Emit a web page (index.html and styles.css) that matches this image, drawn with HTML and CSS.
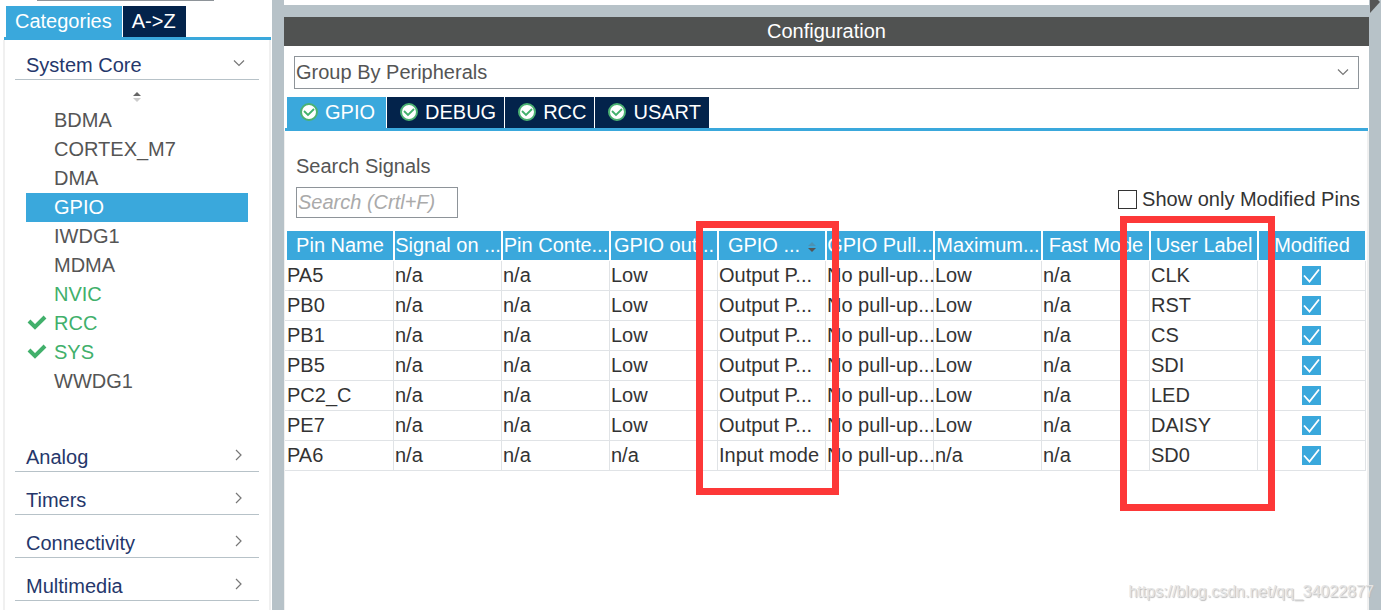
FILE: index.html
```html
<!DOCTYPE html>
<html lang="en">
<head>
<meta charset="utf-8">
<title>Pinout &amp; Configuration</title>
<link rel="stylesheet" href="styles.css">
</head>
<body>
<svg class="defs" aria-hidden="true">
  <symbol id="down" viewBox="0 0 12 12"><path d="M1 3.500 6 8.500 11 3.500" fill="none" stroke="#777" stroke-width="1.2"/></symbol>
  <symbol id="right" viewBox="0 0 12 12"><path d="M3 1 8 6 3 11" fill="none" stroke="#777" stroke-width="1.2"/></symbol>
  <symbol id="tick" viewBox="0 0 20 16"><path d="M2 7 8 13 18 3" fill="none" stroke="#41b06b" stroke-width="4"/></symbol>
  <symbol id="ok" viewBox="0 0 18 18"><circle cx="9" cy="9" r="8" fill="#fff" stroke="#4cb272" stroke-width="2"/><path d="M4 8 8 12 14 6" fill="none" stroke="#41b06b" stroke-width="1.800"/></symbol>
</svg>
<div class="app">
  <aside class="sidebar">
    <div class="search-edge"></div>
    <div class="tabs">
      <button class="tab active">Categories</button>
      <button class="tab">A-&gt;Z</button>
    </div>
    <nav class="panel">
      <button class="section first">System Core<svg class="chev"><use href="#down"/></svg></button>
      <svg class="sort" viewBox="0 0 8 10"><path d="M0 4 4 0 8 4z" fill="#666"/><path d="M0 6h8L4 10z" fill="#ccc"/></svg>
      <ul class="items">
        <li><a href="#">BDMA</a></li>
        <li><a href="#">CORTEX_M7</a></li>
        <li><a href="#">DMA</a></li>
        <li><a href="#" class="selected">GPIO</a></li>
        <li><a href="#">IWDG1</a></li>
        <li><a href="#">MDMA</a></li>
        <li><a href="#" class="on">NVIC</a></li>
        <li><a href="#" class="on"><svg class="tick"><use href="#tick"/></svg>RCC</a></li>
        <li><a href="#" class="on"><svg class="tick"><use href="#tick"/></svg>SYS</a></li>
        <li><a href="#">WWDG1</a></li>
      </ul>
      <button class="section">Analog<svg class="chev"><use href="#right"/></svg></button>
      <button class="section">Timers<svg class="chev"><use href="#right"/></svg></button>
      <button class="section">Connectivity<svg class="chev"><use href="#right"/></svg></button>
      <button class="section">Multimedia<svg class="chev"><use href="#right"/></svg></button>
    </nav>
  </aside>
  <div class="divider"></div>
  <main class="main">
    <div class="split"></div>
    <h1 class="title">Configuration</h1>
    <div class="group">
      <select class="group-select" aria-label="Group by"><option>Group By Peripherals</option></select>
      <svg class="group-chev"><use href="#down"/></svg>
    </div>
    <div class="ptabs">
      <button class="ptab active"><svg><use href="#ok"/></svg>GPIO</button>
      <button class="ptab"><svg><use href="#ok"/></svg>DEBUG</button>
      <button class="ptab"><svg><use href="#ok"/></svg>RCC</button>
      <button class="ptab"><svg><use href="#ok"/></svg>USART</button>
    </div>
    <section class="content">
      <div class="filters">
        <div class="search">
          <label for="q">Search Signals</label>
          <input id="q" type="text" placeholder="Search (Crtl+F)">
        </div>
        <label class="only"><input type="checkbox" class="box">Show only Modified Pins</label>
      </div>
      <table class="pins">
        <colgroup><col class="pin-col"><col span="9"></colgroup>
        <thead><tr><th>Pin Name</th><th>Signal on ...</th><th>Pin Conte...</th><th>GPIO out...</th><th>GPIO ...<svg class="hsort" viewBox="0 0 8 10"><path d="M0 4 4 0 8 4z" fill="#4b93b5"/><path d="M0 6h8L4 10z" fill="#555"/></svg></th><th>GPIO Pull...</th><th>Maximum...</th><th>Fast Mode</th><th>User Label</th><th>Modified</th></tr></thead>
        <tbody>
          <tr><td>PA5</td><td>n/a</td><td>n/a</td><td>Low</td><td>Output P...</td><td>No pull-up...</td><td>Low</td><td>n/a</td><td>CLK</td><td><input type="checkbox" class="box" aria-label="PA5 modified" checked></td></tr>
          <tr><td>PB0</td><td>n/a</td><td>n/a</td><td>Low</td><td>Output P...</td><td>No pull-up...</td><td>Low</td><td>n/a</td><td>RST</td><td><input type="checkbox" class="box" aria-label="PB0 modified" checked></td></tr>
          <tr><td>PB1</td><td>n/a</td><td>n/a</td><td>Low</td><td>Output P...</td><td>No pull-up...</td><td>Low</td><td>n/a</td><td>CS</td><td><input type="checkbox" class="box" aria-label="PB1 modified" checked></td></tr>
          <tr><td>PB5</td><td>n/a</td><td>n/a</td><td>Low</td><td>Output P...</td><td>No pull-up...</td><td>Low</td><td>n/a</td><td>SDI</td><td><input type="checkbox" class="box" aria-label="PB5 modified" checked></td></tr>
          <tr><td>PC2_C</td><td>n/a</td><td>n/a</td><td>Low</td><td>Output P...</td><td>No pull-up...</td><td>Low</td><td>n/a</td><td>LED</td><td><input type="checkbox" class="box" aria-label="PC2_C modified" checked></td></tr>
          <tr><td>PE7</td><td>n/a</td><td>n/a</td><td>Low</td><td>Output P...</td><td>No pull-up...</td><td>Low</td><td>n/a</td><td>DAISY</td><td><input type="checkbox" class="box" aria-label="PE7 modified" checked></td></tr>
          <tr><td>PA6</td><td>n/a</td><td>n/a</td><td>n/a</td><td>Input mode</td><td>No pull-up...</td><td>n/a</td><td>n/a</td><td>SD0</td><td><input type="checkbox" class="box" aria-label="PA6 modified" checked></td></tr>
        </tbody>
      </table>
    </section>
  </main>
  <div class="rail"><svg class="arrow" viewBox="0 0 10 13"><path d="M0 0H8L10 2 0 13z" fill="#555"/></svg></div>
  <div class="mark mark-mode"></div>
  <div class="mark mark-label"></div>
  <div class="watermark">https://blog.csdn.net/qq_34022877</div>
</div>
</body>
</html>
```
FILE: styles.css
```css
* { box-sizing: border-box; }
body {
  margin: 0;
  background: #fff;
  color: #333;
  font: 20px/24px "Liberation Sans", Arial, sans-serif;
}
button, input, select { font: inherit; color: inherit; border-radius: 0; margin: 0; }
button { border: 0; cursor: pointer; white-space: nowrap; }
.defs { position: absolute; width: 0; height: 0; }
.app {
  position: relative;
  display: flex;
  min-height: 100vh;
  padding-right: 3px;
  overflow: hidden;
}

/* Sidebar */
.sidebar { flex: 0 0 272px; display: flex; flex-direction: column; padding: 0 1px 0 3px; }
.search-edge { height: 1px; margin: 0 57px 5px 34px; background: #8e9499; }
.tabs { display: flex; gap: 1px; padding-left: 2px; margin-left: 1px; border-bottom: 3px solid #3aa8dc; }
.tab { height: 31px; padding: 0 10px 2px 9px; background: #03234b; color: #fff; }
.tab.active { background: #3aa8dc; }
.panel {
  flex: 1;
  display: flex;
  flex-direction: column;
  padding: 0 10px;
  border: solid #f0f0f0;
  border-width: 0 2px;
}
.section {
  display: flex;
  align-items: flex-end;
  justify-content: space-between;
  height: 43px;
  padding: 0 14px 2px 11px;
  border-bottom: 1px solid #b7c2c8;
  background: none;
  color: #25376b;
}
.section.first { height: 40px; }
.chev { width: 12px; height: 12px; margin-bottom: 8px; }
.sort { width: 8px; height: 10px; margin: 12px auto 4px; }
.items { list-style: none; margin: 0 11px 33px; padding: 0; }
.items a {
  display: flex;
  align-items: center;
  position: relative;
  height: 29px;
  padding: 0 0 2px 28px;
  color: #555;
  text-decoration: none;
}
.items a.on { color: #41b06b; }
.items a.selected { background: #3aa8dc; color: #fff; }
.tick { position: absolute; left: 1px; top: 5px; width: 20px; height: 16px; }

.divider { flex: 0 0 12px; background: #b7c2c8; }

/* Configuration pane */
.main { flex: 1; min-width: 0; display: flex; flex-direction: column; }
.split { height: 17px; border-top: 5px solid #fff; background: #b7c2c8; }
.title {
  margin: 0;
  height: 29px;
  background: #505251;
  color: #fff;
  font: inherit;
  line-height: 29px;
  text-align: center;
}
.group { position: relative; margin: 10px 10px 8px; }
.group-select {
  display: block;
  width: 100%;
  height: 33px;
  padding: 0 1px 2px;
  border: 1px solid #8e9499;
  background: #fff;
  color: #555;
  appearance: none;
}
.group-chev { position: absolute; right: 10px; top: 10px; width: 12px; height: 12px; pointer-events: none; }
.ptabs {
  display: flex;
  gap: 1px;
  margin: 0 1px;
  padding-left: 2px;
  border-bottom: 3px solid #3aa8dc;
}
.ptab {
  display: flex;
  align-items: center;
  gap: 7px;
  height: 31px;
  padding: 0 8px 2px 13px;
  background: #03234b;
  color: #fff;
}
.ptab.active { padding-right: 11px; background: #3aa8dc; }
.ptab svg { width: 18px; height: 18px; }
.content { flex: 1; padding-right: 1px; border: solid #f0f0f0; border-width: 0 2px 0 1px; }
.filters {
  display: flex;
  justify-content: space-between;
  align-items: flex-end;
  padding: 23px 6px 13px 11px;
}
.search { display: flex; flex-direction: column; gap: 9px; color: #555; }
.search input { width: 162px; height: 31px; padding: 0 1px; border: 1px solid #8e9499; background: #fff; }
.search input::placeholder { color: #aaa; font-style: italic; opacity: 1; }
.only { display: flex; align-items: center; gap: 5px; padding-bottom: 7px; white-space: nowrap; }
.box {
  appearance: none;
  display: block;
  width: 19px;
  height: 19px;
  border: 1px solid #333;
  background: #fff;
}
.box:checked {
  border: 0;
  background: #3aa8dc url("data:image/svg+xml,%3Csvg xmlns='http://www.w3.org/2000/svg' viewBox='0 0 19 19'%3E%3Cpath d='M2 9.500 7.500 15.500 17 3.500' fill='none' stroke='white' stroke-width='1.800'/%3E%3C/svg%3E");
}

.pins { width: 100%; table-layout: fixed; border-collapse: separate; border-spacing: 0; }
.pin-col { width: 109px; }
.pins th, .pins td { height: 30px; padding: 0 0 2px; white-space: nowrap; }
.pins th {
  border: solid #fff;
  border-width: 0 1px 1px;
  background: #3aa8dc;
  color: #fff;
  font-weight: normal;
}
.pins td { padding-left: 1px; border: solid #e0e3e6; border-width: 0 1px 1px 0; text-align: left; }
.pins th:first-child { border-left-width: 2px; }
.pins td:first-child { padding-left: 2px; }
.pins td:last-child { padding: 0; }
.pins td .box { margin: 0 auto; }
.hsort { width: 8px; height: 10px; margin-left: 8px; }

.rail { flex: 0 0 12px; background: #b7c2c8; }
.arrow { display: block; width: 10px; height: 13px; margin-left: 1px; }

/* Annotations over the screen */
.mark { position: absolute; border: 7px solid #fd3838; pointer-events: none; }
.mark-mode { left: 696px; top: 221px; width: 143px; height: 274px; }
.mark-label { left: 1120px; top: 216px; width: 155px; height: 295px; }
.watermark {
  position: absolute;
  right: 10px;
  bottom: 6px;
  color: #e4e4e4;
  font-size: 16px;
  text-shadow: 1px 1px 1px #bbb;
}
```
